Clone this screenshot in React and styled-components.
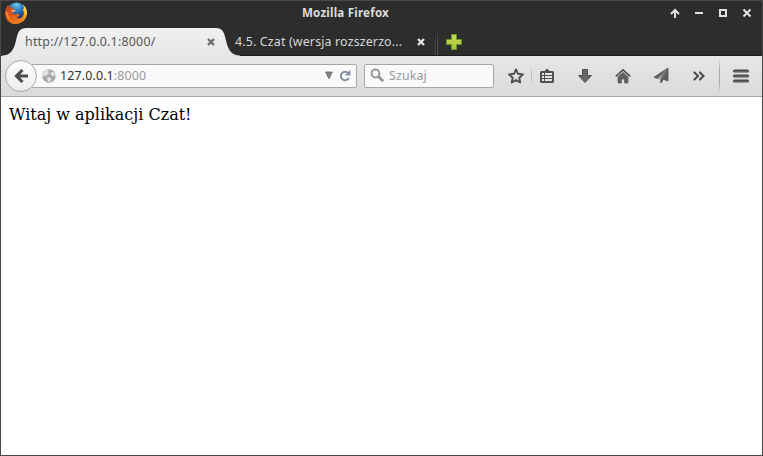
import React from 'react';
import styled, { createGlobalStyle } from 'styled-components';

const GlobalStyle = createGlobalStyle`
  * { box-sizing: border-box; }
  html, body { margin: 0; padding: 0; overflow: hidden; }
  svg { display: block; flex: none; }
`;

const Window = styled.div`
  width: 763px;
  height: 456px;
  display: flex;
  flex-direction: column;
  border: 1px solid #484848;
  background: #fff;
  font-family: 'Noto Sans', 'Open Sans', sans-serif;
  font-size: 12px;
`;

const TitleBar = styled.header`
  display: grid;
  grid-template-columns: 110px 1fr 110px;
  height: 27px;
  flex: none;
  background: #2d2d2d;
`;

const AppIcon = styled.div`
  padding-left: 3px;
`;

const WindowTitle = styled.div`
  color: #dcdcdc;
  font-weight: 700;
  font-size: 11.6px;
  letter-spacing: 0.2px;
  line-height: 24px;
  text-align: center;
  padding-right: 73px;
  margin-right: -1px;
`;

const WindowControls = styled.div`
  display: flex;
  gap: 12px;
  padding: 6px 9px 0 0;
  justify-content: flex-end;
`;

const TabStrip = styled.nav`
  display: flex;
  height: 28px;
  flex: none;
  background: #2d2d2d;
  border-bottom: 1px solid #1c1c1c;
`;

const ActiveTab = styled.div`
  display: flex;
  height: 28px;
  flex: none;
`;

const TabBody = styled.div`
  display: flex;
  width: 188px;
  padding-right: 1px;
  background: linear-gradient(#f1f1f1, #e7e7e7);
`;

const TabLabel = styled.span`
  width: ${(p) => p.$width}px;
  flex: none;
  margin-left: ${(p) => p.$offset || 0}px;
  color: ${(p) => p.$color};
  font-size: 12.4px;
  letter-spacing: ${(p) => p.$tracking}px;
  line-height: 27px;
  white-space: nowrap;
`;

const TabClose = styled.div`
  padding-top: 10px;
`;

const InactiveTab = styled.div`
  display: flex;
  width: 194px;
  flex: none;
`;

const TabDivider = styled.div`
  width: 3px;
  height: 27px;
  flex: none;
  border-left: 1px solid #4a4744;
  border-right: 1px solid #57534e;
  background: #202020;
  mask-image: linear-gradient(transparent, #000 60%);
`;

const NewTab = styled.div`
  padding: 5px 0 0 7px;
`;

const Toolbar = styled.div`
  display: flex;
  align-items: center;
  height: 41px;
  flex: none;
  padding: 0 0 1px 4px;
  background: linear-gradient(#e7e7e7, #dadada);
  border-bottom: 1px solid #a5a5a5;
`;

const BackButton = styled.div`
  width: 32px;
  height: 32px;
  flex: none;
  z-index: 1;
  border: 1px solid #a3abb5;
  border-radius: 50%;
  background: linear-gradient(#fbfbfb, #ededed);
  display: flex;
  align-items: center;
  justify-content: center;
  padding-left: 2px;
`;

const Field = styled.div`
  display: flex;
  align-items: center;
  height: 24px;
  flex: none;
  border: 1px solid #a6a6a6;
  border-radius: 2px;
  background: #fafafa;
  font-size: 12.4px;
  letter-spacing: 0.15px;
  color: #999;
`;

const AddressField = styled(Field)`
  width: 326px;
  margin-left: -6px;
  padding-left: 10px;
`;

const SearchField = styled(Field)`
  width: 130px;
  margin: 0 7px;
  padding-left: 5px;
  gap: 4px;
`;

const Address = styled.span`
  flex: 1;
  margin-left: 4px;
  line-height: 22px;
`;

const Host = styled.span`
  color: #303030;
`;

const ToolCell = styled.div`
  width: ${(p) => p.$width}px;
  height: 24px;
  flex: none;
  display: flex;
  align-items: center;
  justify-content: center;
`;

const Separator = styled.div`
  width: 1px;
  height: ${(p) => p.$height}px;
  flex: none;
  background: linear-gradient(transparent, ${(p) => p.$color} 30%, ${(p) => p.$color} 70%, transparent);
`;

const Page = styled.main`
  padding: 8px;
  font: 16px/19px 'DejaVu Serif', serif;
  color: #000;
`;

const FirefoxLogo = () => (
  <svg width="24" height="24" viewBox="0 0 24 24">
    <defs>
      <radialGradient id="globe" cx=".5" cy=".1" r=".8">
        <stop offset="0" stopColor="#6cc4ea" />
        <stop offset=".5" stopColor="#2474b8" />
        <stop offset="1" stopColor="#102a66" />
      </radialGradient>
      <linearGradient id="fox" x1="0" y1="0" x2=".7" y2="1">
        <stop offset="0" stopColor="#b9441a" />
        <stop offset=".5" stopColor="#e2571b" />
        <stop offset="1" stopColor="#ee8a1f" />
      </linearGradient>
      <linearGradient id="tail" x1="0" y1="0" x2="0" y2="1">
        <stop offset="0" stopColor="#fff06a" />
        <stop offset=".5" stopColor="#fbb62e" />
        <stop offset="1" stopColor="#e87018" />
      </linearGradient>
    </defs>
    <circle cx="12.5" cy="11" r="9.500" fill="url(#globe)" />
    <path d="M2.600 6.500 4 3.800 5 6 8 5.800 9 7.800 11.800 9.200 11 10.300 8.800 11.100 8.700 12.600 10.800 13.500 14 12.700 15.800 14 14 15.900 12 16.500C15 18 18.500 17 19.500 13.500L20.300 8 22.500 8C23.500 13 21.800 17.300 19 20 13.500 25 5 23.500 2.200 17.500.6 13.500 1 9.500 2.600 6.500Z" fill="url(#fox)" />
    <path d="M18.700 3.200c4.600 3.800 5.400 9.600 2.900 14-2.300 4-6.200 5.700-9.900 5.600 4.700-1.400 7.700-4.600 8.200-8.600.3-2.300-.1-4.300-1.100-5.800 1.700.2 1.300-3-.1-5.200Z" fill="url(#tail)" />
    <path d="M6.800 9 11.500 9.200 10.800 10.300 8.600 10.900Z" fill="#f3c08a" />
    <path d="M1.800 10c-.5 4.500 2 8.500 7.200 11C5.500 17.500 4 14.500 3.700 11.500Z" fill="#f58a1e" />
  </svg>
);

const CloseGlyph = ({ color }) => (
  <svg width="8" height="8" viewBox="0 0 8 8">
    <path d="M1 1 7 7M7 1 1 7" stroke={color} strokeWidth="2.4" />
  </svg>
);

const Control = ({ children }) => (
  <svg width="12" height="12" viewBox="0 0 12 12" fill="none" stroke="#e2e2e2" strokeWidth="2">
    {children}
  </svg>
);

const TabEdge = ({ side, width }) => (
  <svg width={width} height="28" viewBox={'0 0 ' + width + ' 28'}>
    <defs>
      <linearGradient id={'edge' + side} x1="0" y1="0" x2="0" y2="1">
        <stop offset="0" stopColor="#f1f1f1" />
        <stop offset="1" stopColor="#e7e7e7" />
      </linearGradient>
    </defs>
    <path
      transform={side === 'right' ? 'translate(' + width + ' 0) scale(-1 1)' : undefined}
      d="M27 0H26C18 0 16.8 4.5 15 12.5 13 21.5 9.5 27.5 1 27.5V28H27Z"
      fill={'url(#edge' + side + ')'}
    />
  </svg>
);

const PlusIcon = () => (
  <svg width="17" height="17" viewBox="0 0 17 17">
    <defs>
      <linearGradient id="plus" x1="0" y1="0" x2="0" y2="1">
        <stop offset="0" stopColor="#cbdb55" />
        <stop offset="1" stopColor="#a3c234" />
      </linearGradient>
    </defs>
    <path d="M6.500 1.500h5v5h5v5h-5v5h-5v-5h-5v-5h5Z" fill="url(#plus)" stroke="#679726" />
  </svg>
);

const BackIcon = () => (
  <svg width="16" height="16" viewBox="0 0 16 16">
    <path d="M8.400 2 2.500 8l5.900 6M3.500 8H14" fill="none" stroke="#4c4c4c" strokeWidth="3.200" />
  </svg>
);

const GlobeIcon = () => (
  <svg width="14" height="14" viewBox="0 0 14 14">
    <circle cx="7" cy="7" r="6.700" fill="#a8a8a8" />
    <path d="m2 3 3-2 2 .4L6.200 3 7 4.200 5 5.400 4.600 7 2.800 6.500 1.200 7.800.6 6ZM8 4.700l2-2 2.200 1 .9 3L11 7.200 9 6ZM5.200 8l2.600.4L9.200 10 7.800 12.800 6 12.500 5.300 10Z" fill="#e4e4e4" />
  </svg>
);

const DropIcon = () => (
  <svg width="8" height="9" viewBox="0 0 8 9">
    <path d="M.7 1h6.600L4 7.800Z" fill="#858585" stroke="#606060" strokeWidth=".8" />
  </svg>
);

const ReloadIcon = () => (
  <svg width="12" height="13" viewBox="0 0 12 13">
    <path d="M9.200 4.200A4.200 4.200 0 1 0 9.800 9" fill="none" stroke="#8293a5" strokeWidth="2" />
    <path d="M11.500.8v5.700H5.800Z" fill="#8293a5" />
  </svg>
);

const SearchIcon = () => (
  <svg width="15" height="15" viewBox="0 0 15 15" fill="none" stroke="#969696">
    <circle cx="5.500" cy="5.500" r="3.900" strokeWidth="2" />
    <path d="m8.400 8.400 4.800 4.800" strokeWidth="2.800" />
  </svg>
);

const StarIcon = () => (
  <svg width="16" height="16" viewBox="0 0 16 16">
    <path d="m8 1.400 2 4.400 4.900.6-3.600 3.300.9 4.800L8 12.100l-4.200 2.400.9-4.800L1.100 6.400 6 5.800Z" fill="none" stroke="#4d4d4d" strokeWidth="1.900" strokeLinejoin="round" />
  </svg>
);

const ListIcon = () => (
  <svg width="16" height="16" viewBox="0 0 16 16">
    <path d="M2 3h3.500L8 .6 10.500 3H14l1 1v10l-1 1H2L1 14V4Z" fill="#505050" />
    <path d="M3 6h2M6 6h7M3 9h2M6 9h7M3 12h2M6 12h7" stroke="#e5e5e5" strokeWidth="2" />
  </svg>
);

const DownloadIcon = () => (
  <svg width="16" height="16" viewBox="0 0 16 16">
    <path d="M5.500 1.500h5v6h4L8 14.500 1.500 7.500h4Z" fill="#676767" stroke="#505050" />
  </svg>
);

const HomeIcon = () => (
  <svg width="16" height="16" viewBox="0 0 16 16">
    <path d="M3 8.800 8 4.400 13 8.800V15H9.500v-4h-3v4H3Z" fill="#606060" stroke="#4d4d4d" strokeWidth=".6" />
    <path d="m.8 8.400L8 1.800l7.200 6.600" fill="none" stroke="#4d4d4d" strokeWidth="1.600" />
  </svg>
);

const SendIcon = () => (
  <svg width="16" height="17" viewBox="0 0 16 17">
    <path d="M15 1v13l-4.700-1.800L8 16l-.8-4L12.500 4.500 5 11.500 1 10.300Z" fill="#606060" stroke="#4c4c4c" strokeWidth=".8" />
    <path d="M13.500 3 4.500 11.300M13.800 2.500 7.500 12v3" fill="none" stroke="#a8a8a8" strokeWidth=".5" />
  </svg>
);

const MoreIcon = () => (
  <svg width="12" height="10" viewBox="0 0 12 10">
    <path d="M.5 1.500h1L5 5 1.500 8.500h-1M6 1.500h1L10.500 5 7 8.500H6" fill="none" stroke="#4a4a4a" strokeWidth="2.100" />
  </svg>
);

const MenuIcon = () => (
  <svg width="16" height="14" viewBox="0 0 16 14">
    <path d="M1.500 2h13M1.500 7h13M1.500 12h13" stroke="#484848" strokeWidth="3" strokeLinecap="round" />
    <path d="M1.500 2.500h13M1.500 7.500h13M1.500 12.500h13" stroke="#666" strokeWidth="1" />
  </svg>
);

export default function App() {
  return (
    <>
      <GlobalStyle />
      <Window>
        <TitleBar>
          <AppIcon><FirefoxLogo /></AppIcon>
          <WindowTitle>Mozilla Firefox</WindowTitle>
          <WindowControls>
            <Control><path d="M6 11V4M2 7l4-4 4 4" /></Control>
            <Control><path d="M2 6h8" /></Control>
            <Control><path d="M3 3h6v6H3Z" /></Control>
            <Control><path d="m2.500 2.500 7 7m0-7-7 7" /></Control>
          </WindowControls>
        </TitleBar>
        <TabStrip>
          <ActiveTab>
            <TabEdge side="left" width={27} />
            <TabBody>
              <TabLabel $width={182} $offset={-3} $tracking={0.23} $color="#555">http://127.0.0.1:8000/</TabLabel>
              <TabClose><CloseGlyph color="#6c6c6c" /></TabClose>
            </TabBody>
            <TabEdge side="right" width={25} />
          </ActiveTab>
          <InactiveTab>
            <TabLabel $width={182} $offset={-6} $tracking={0.16} $color="#d6d6d6">4.5. Czat (wersja rozszerzo...</TabLabel>
            <TabClose><CloseGlyph color="#e2e2e2" /></TabClose>
          </InactiveTab>
          <TabDivider />
          <NewTab><PlusIcon /></NewTab>
        </TabStrip>
        <Toolbar>
          <BackButton><BackIcon /></BackButton>
          <AddressField>
            <GlobeIcon />
            <Address><Host>127.0.0.1</Host>:8000</Address>
            <DropIcon />
            <ToolCell $width={23}><ReloadIcon /></ToolCell>
          </AddressField>
          <SearchField><SearchIcon />Szukaj</SearchField>
          <ToolCell $width={30}><StarIcon /></ToolCell>
          <Separator $height={20} $color="#bcc0c6" />
          <ToolCell $width={30}><ListIcon /></ToolCell>
          <ToolCell $width={46}><DownloadIcon /></ToolCell>
          <ToolCell $width={30}><HomeIcon /></ToolCell>
          <ToolCell $width={46}><SendIcon /></ToolCell>
          <ToolCell $width={29}><MoreIcon /></ToolCell>
          <ToolCell $width={6} />
          <Separator $height={34} $color="#a4adb5" />
          <ToolCell $width={42}><MenuIcon /></ToolCell>
        </Toolbar>
        <Page>Witaj w aplikacji Czat!</Page>
      </Window>
    </>
  );
}
